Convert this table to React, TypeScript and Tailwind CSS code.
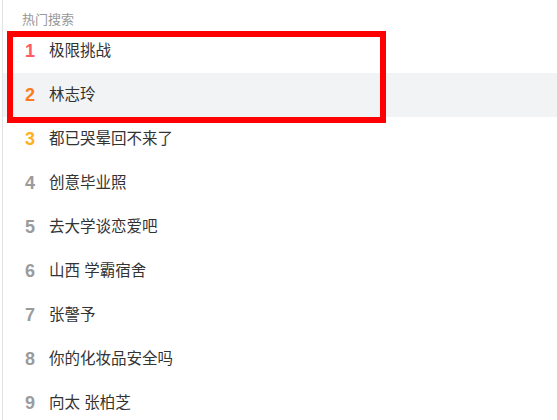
const HOT_WORDS = [
  "极限挑战",
  "林志玲",
  "都已哭晕回不来了",
  "创意毕业照",
  "去大学谈恋爱吧",
  "山西 学霸宿舍",
  "张謦予",
  "你的化妆品安全吗",
  "向太 张柏芝",
];

const RANK_COLORS = ["text-[#ff5b61]", "text-[#ff7a1c]", "text-[#ffb022]"];

export default function App() {
  return (
    <div
      className="relative w-[557px] h-[420px] overflow-hidden bg-white"
      style={{ fontFamily: '"Liberation Sans", Arial, "Noto Sans CJK SC", sans-serif' }}
    >
      <div className="ml-[2px] h-full border-l border-[#e3e3e3]">
        <div className="h-[29px] pl-[19px] pt-[12px] text-[13px] leading-[16px] text-[#999]">热门搜索</div>
        <ul>
          {HOT_WORDS.map((word, idx) => (
            <li
              key={word}
              className={`flex items-center h-[44px] ${idx === 1 ? "bg-[#f2f3f5]" : ""}`}
            >
              <span
                className={`w-[24px] pl-[22px] box-content text-[18px] font-bold leading-none ${RANK_COLORS[idx] ?? "text-[#9b9b9b]"}`}
              >
                {idx + 1}
              </span>
              <span className="text-[15.5px] text-[#333]">{word}</span>
            </li>
          ))}
        </ul>
      </div>
      {/* annotation box */}
      <div className="absolute left-[7px] top-[31px] w-[379px] h-[92px] border-[6px] border-[#ff0000]" />
    </div>
  );
}
